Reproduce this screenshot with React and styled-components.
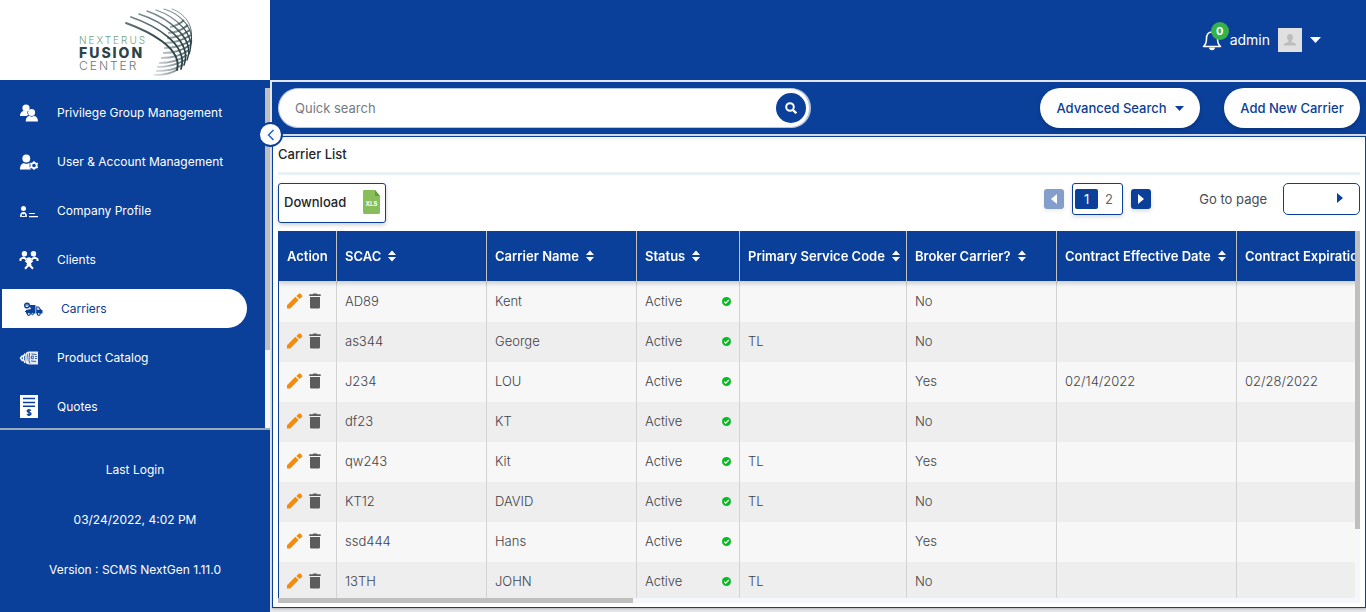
import React from "react";
import styled, { createGlobalStyle } from "styled-components";

const BLUE = "#0a4099";

const Global = createGlobalStyle`
  * { box-sizing: border-box; }
  body {
    margin: 0;
    background: #e4e5e9;
    color: #212529;
    font-family: Inter, "Liberation Sans", sans-serif;
    font-size: 13px;
  }
  button, input { font-family: inherit; font-size: inherit; }
  button { cursor: pointer; }
`;

const Shell = styled.div`
  display: flex;
  height: 100vh;
  overflow: hidden;
`;

/* Sidebar */
const Sidebar = styled.aside`
  position: relative;
  display: flex;
  flex-direction: column;
  flex: none;
  width: 270px;
  background: ${BLUE};
  color: #fff;
  font-size: 12px;
`;

const Brand = styled.a`
  display: flex;
  justify-content: center;
  flex: none;
  height: 80px;
  background: #fff;
`;

const NavArea = styled.div`
  display: flex;
  flex: 1;
  min-height: 0;
  margin-top: 8px;
  border-bottom: 2px solid #9aa9c0;
`;

const Nav = styled.nav`
  display: flex;
  flex-direction: column;
  flex: 1;
  gap: 10px;
  padding: 5px 0;
  overflow: auto;
  scrollbar-width: none;
`;

const NavLink = styled.a`
  display: flex;
  align-items: center;
  flex: none;
  height: 39px;
  gap: 18px;
  margin: 0 18px 0 2px;
  padding-left: ${(p) => (p.$active ? "21px" : "17px")};
  border-radius: 0 20px 20px 0;
  background: ${(p) => (p.$active ? "#fff" : "transparent")};
  color: ${(p) => (p.$active ? BLUE : "#fff")};
  text-decoration: none;

  svg { flex: none; }
`;

const Track = styled.div`
  flex: none;
  width: ${(p) => (p.$horizontal ? "auto" : "5px")};
  height: ${(p) => (p.$horizontal ? "5px" : "auto")};
  background: #f5f7fa;
`;

const Thumb = styled.div`
  width: ${(p) => p.$w || "100%"};
  height: ${(p) => p.$h || "100%"};
  background: #bfbfbf;
`;

const LoginInfo = styled.div`
  flex: none;
  display: flex;
  flex-direction: column;
  gap: 30px;
  padding: 30px 0 32px;
  text-align: center;
  line-height: 20px;

  p { margin: 0; }
`;

const Collapse = styled.button`
  position: absolute;
  z-index: 3;
  top: 122px;
  right: -13px;
  display: flex;
  align-items: center;
  justify-content: center;
  width: 25px;
  height: 25px;
  padding: 0;
  border: 2px solid ${BLUE};
  border-radius: 50%;
  background: #fff;
`;

/* Main column */
const Main = styled.main`
  display: flex;
  flex-direction: column;
  flex: 1;
  min-width: 0;
`;

const TopBar = styled.header`
  display: flex;
  align-items: center;
  justify-content: flex-end;
  gap: 8px;
  flex: none;
  height: 80px;
  padding-right: 45px;
  background: ${BLUE};
  color: #fff;
  font-size: 14px;
`;

const Bell = styled.button`
  position: relative;
  width: 20px;
  height: 22px;
  padding: 0;
  border: 0;
  background: none;
`;

const Badge = styled.span`
  position: absolute;
  top: -7px;
  right: -7px;
  width: 18px;
  height: 18px;
  border-radius: 50%;
  background: #36b24a;
  color: #fff;
  font-size: 11px;
  font-weight: 700;
  line-height: 18px;
`;

const UserMenu = styled.button`
  display: flex;
  align-items: center;
  gap: 8px;
  padding: 0;
  border: 0;
  background: none;
  color: #fff;
  line-height: 16px;
`;

const Body = styled.div`
  display: flex;
  flex-direction: column;
  flex: 1;
  min-height: 0;
  padding-bottom: 4px;
  border-left: 2px solid #e4e5e9;
`;

const Toolbar = styled.div`
  display: flex;
  align-items: center;
  gap: 24px;
  flex: none;
  height: 56px;
  padding: 0 6px;
  border-top: 2px solid #e4e5e9;
  border-bottom: 2px solid #d9dadd;
  background: ${BLUE};
`;

const Search = styled.form`
  display: flex;
  align-items: center;
  width: 50%;
  max-width: 533px;
  height: 40px;
  margin-right: auto;
  padding: 0 3px 0 14px;
  border: 1px solid #b5c6e0;
  border-right-width: 2px;
  border-radius: 20px;
  background: #fff;
`;

const SearchInput = styled.input`
  flex: 1;
  min-width: 0;
  border: 0;
  outline: 0;
  background: none;
  color: #333;

  &::placeholder { color: #757b82; opacity: 1; }
`;

const SearchButton = styled.button`
  display: flex;
  align-items: center;
  justify-content: center;
  width: 30px;
  height: 30px;
  padding: 0;
  border: 0;
  border-radius: 50%;
  background: ${BLUE};
`;

const Pill = styled.button`
  display: flex;
  align-items: center;
  justify-content: center;
  gap: 8px;
  width: ${(p) => p.$width};
  height: 40px;
  padding: 0;
  border: 0;
  border-radius: 20px;
  background: #fff;
  color: ${BLUE};
  font-weight: 500;
  box-shadow: 0 2px 4px rgba(0, 0, 0, 0.2);
`;

const Panel = styled.section`
  display: flex;
  flex-direction: column;
  flex: 1;
  min-height: 0;
  padding: 0 5px 4px;
  border: 1px solid ${BLUE};
  background: linear-gradient(#f4f4f4, #fff 5px);
  box-shadow: 0 1px 2px rgba(0, 0, 0, 0.2);
`;

const PanelTitle = styled.h1`
  flex: none;
  height: 38px;
  margin: 0;
  border-bottom: 3px solid #e9f1f8;
  font-size: 13px;
  font-weight: 500;
  line-height: 34px;
`;

const Actions = styled.div`
  display: flex;
  align-items: flex-start;
  flex: none;
  gap: 8px;
  height: 56px;
  padding-top: 8px;
`;

const Download = styled.button`
  display: flex;
  align-items: center;
  justify-content: space-between;
  width: 108px;
  height: 40px;
  margin-right: auto;
  padding: 0 5px 3px;
  border: 1px solid ${BLUE};
  border-radius: 3px;
  background: #fff;
  color: #212529;
  font-weight: 500;
  box-shadow: 0 2px 4px rgba(0, 0, 0, 0.2);
`;

const Step = styled.button`
  display: flex;
  align-items: center;
  justify-content: center;
  width: 20px;
  height: 20px;
  margin-top: 6px;
  padding: 0;
  border: 0;
  border-radius: 3px;
  background: ${BLUE};
  opacity: ${(p) => (p.disabled ? 0.5 : 1)};
  box-shadow: 0 2px 4px rgba(0, 0, 0, 0.15);
`;

const Pages = styled.div`
  display: flex;
  align-items: center;
  width: 51px;
  height: 32px;
  padding: 0 2px;
  border: 1px solid ${BLUE};
  border-radius: 3px;
  background: #fff;
  box-shadow: 0 2px 4px rgba(0, 0, 0, 0.15);
`;

const PageButton = styled.button`
  flex: 1;
  height: 20px;
  padding: 0;
  border: 0;
  border-radius: 2px;
  background: ${(p) => (p.$current ? BLUE : "none")};
  color: ${(p) => (p.$current ? "#fff" : "#666")};
`;

const GoLabel = styled.label`
  margin: 0 8px 0 40px;
  color: #454b52;
  line-height: 32px;
`;

const GoBox = styled.div`
  display: flex;
  align-items: center;
  width: 77px;
  height: 32px;
  padding: 0 16px 2px 0;
  border: 1px solid ${BLUE};
  border-radius: 5px;
  background: #fff;
`;

const GoInput = styled.input`
  flex: 1;
  min-width: 0;
  border: 0;
  outline: 0;
  background: none;
`;

const PlainButton = styled.button`
  display: inline-flex;
  padding: 0;
  border: 0;
  background: none;
`;

const GridArea = styled.div`
  display: flex;
  flex: 1;
  min-height: 0;
`;

const GridColumn = styled.div`
  display: flex;
  flex-direction: column;
  flex: 1;
  min-width: 0;
`;

const Scroller = styled.div`
  flex: 1;
  min-height: 0;
  overflow: auto;
  border-left: 1px solid ${BLUE};
  scrollbar-width: none;
`;

const Table = styled.table`
  width: 1158px;
  table-layout: fixed;
  border-collapse: separate;
  border-spacing: 0;
`;

const Th = styled.th`
  position: sticky;
  top: 0;
  width: ${(p) => p.$width}px;
  height: 51px;
  padding: 0 0 1px 8px;
  border-right: 1px solid #cfcfcf;
  border-bottom: 1px solid #d5d5d5;
  background: ${BLUE};
  color: #fff;
  font-weight: 600;
  text-align: left;
  white-space: nowrap;
  box-shadow: 0 2px 4px rgba(0, 0, 0, 0.15);

  svg { margin-left: 6px; vertical-align: -1px; }
`;

const Tr = styled.tr`
  background: #f7f7f7;

  &:nth-child(even) { background: #eee; }
`;

const Td = styled.td`
  height: 40px;
  padding: 0 8px 2px;
  border-right: 1px solid #d3d3d3;
  color: #3f4348;
  font-weight: 300;
`;

const RowTools = styled.div`
  display: flex;
  gap: 5px;
`;

const StatusCell = styled.div`
  display: flex;
  align-items: center;
  justify-content: space-between;
`;

/* Drawings */
const Triangle = ({ dir, color = "#fff", w = 6, h = 10 }) => (
  <svg width={w} height={h} viewBox="0 0 10 10" preserveAspectRatio="none" aria-hidden="true">
    <path fill={color} d={{ left: "M10 0v10L0 5z", right: "M0 0v10l10-5z", down: "M0 0h10L5 10z" }[dir]} />
  </svg>
);

const LogoText = styled.text`
  font-family: Inter, sans-serif;
  letter-spacing: 2px;
`;

const Logo = () => (
  <svg width="270" height="80" viewBox="0 0 270 80" role="img" aria-label="Nexterus Fusion Center">
    <defs>
      <linearGradient id="lat" gradientUnits="userSpaceOnUse" x1="154" x2="186" y1="0" y2="0">
        <stop offset="0" stopColor="#40575c" stopOpacity="0.15" />
        <stop offset="1" stopColor="#40575c" stopOpacity="0.85" />
      </linearGradient>
      <linearGradient id="lon" gradientUnits="userSpaceOnUse" x1="0" x2="0" y1="8" y2="40">
        <stop offset="0" stopColor="#40575c" stopOpacity="0.6" />
        <stop offset="1" stopColor="#2b4449" />
      </linearGradient>
    </defs>
    <LogoText x="79" y="44" fontSize="10" fontWeight="300" fill="#6fa383">NEXTERUS</LogoText>
    <LogoText x="79" y="58" fontSize="14" fontWeight="800" fill="#2b4449">FUSION</LogoText>
    <LogoText x="79" y="70" fontSize="12" fontWeight="300" fill="#6c787c">CENTER</LogoText>
    <g fill="none" stroke="url(#lat)" strokeWidth="2">
      <path d="M154 75C165 75 173 73 178 69" />
      <path d="M156 71C167 71 176 69 182 65" />
      <path d="M157 67C168 67 178 64 185 60" />
      <path d="M159 63C170 63 180 60 187 55" />
      <path d="M161 58C171 58 181 56 189 50" />
      <path d="M163 53C173 53 182 51 190 45" />
      <path d="M164 48C174 48 183 46 191 40" />
      <path d="M165 43C174 43 183 40 191 35" />
      <path d="M167 38C175 38 183 35 190 30" />
      <path d="M168 33C176 33 182 30 188 25" />
      <path d="M170 27C175 26 180 24 184 20" />
    </g>
    <g fill="none" stroke="url(#lon)" strokeLinecap="round">
      <path strokeWidth="1.9" d="M126 23C148 31 183 48 177 70" />
      <path strokeWidth="1.8" d="M131 17C154 25 189 44 181 69" />
      <path strokeWidth="1.600" d="M139 14C161 21 193 41 184 65" />
      <path strokeWidth="1.500" d="M147 11C167 18 196 38 187 60" />
      <path strokeWidth="1.300" d="M156 10C174 16 197 34 189 54" />
      <path strokeWidth="1.100" d="M164 9C181 14 197 30 190 48" />
      <path strokeWidth="0.9" d="M172 9C184 13 194 25 191 40" />
    </g>
  </svg>
);

const Icon = ({ children, w = 20, h = 20 }) => (
  <svg width={w} height={h} viewBox={`0 0 ${w} ${h}`} fill="currentColor" aria-hidden="true">
    {children}
  </svg>
);

const icons = {
  group: (
    <Icon>
      <circle cx="7" cy="5" r="3.6" />
      <path d="M1 13c0-3 1.500-5 4-5h3.500c-.6 2 .2 3.200 1 4-1 .3-1.900 1-2.300 1z" />
      <circle cx="12.600" cy="9.500" r="3.500" />
      <path d="M6.700 18.500c0-3.500 1.600-5.500 4-5.500 1.200 1 2.800 1 4 0 2.600 0 4.300 2 4.300 5.500z" />
    </Icon>
  ),
  account: (
    <Icon>
      <circle cx="7.300" cy="6.500" r="3.900" />
      <path d="M1 17.500c0-4 1.500-6.300 4-6.300 1.600.8 3.200.8 4.700 0l1.200.3c-.8 1.900-.4 4.200 1 6z" />
      <circle cx="15" cy="13.500" r="2.700" fill="none" stroke="currentColor" strokeWidth="1.800" />
      <g stroke="currentColor" strokeWidth="1.600">
        <path d="M15 9.200v1.500M15 16.300v1.500M11.200 11.300l1.400.8M17.400 14.900l1.400.8M11.200 15.700l1.400-.8M17.400 12.100l1.400-.8" />
      </g>
    </Icon>
  ),
  profile: (
    <Icon>
      <circle cx="4.500" cy="7.500" r="2.500" />
      <path fillRule="evenodd" d="M1 16c0-3.500 1.200-5 3.500-5S8 12.500 8 16H6.300c0-2.200-.5-3.200-1-3.200l-.8 1-.8-1c-.6 0-1 1-1 3.200z" />
      <path d="M3 15h3v1H3zM10 12h6v1h-6zM10 15h9v1.200h-9z" />
    </Icon>
  ),
  clients: (
    <Icon>
      <circle cx="5.400" cy="3.800" r="2.700" />
      <circle cx="14.500" cy="3.800" r="2.700" />
      <circle cx="10" cy="9.800" r="2.600" />
      <path fill="none" stroke="currentColor" strokeWidth="2" strokeLinejoin="round" d="M1.500 11V9l3-1.700 3 2M18.500 11V9l-3-1.700-3 2M6.500 10.500l3 3M13.500 10.500l-3 3M8.600 12.500v3.500L6 18.800M11.400 12.500v3.500l2.600 2.800" />
      <path d="M8 12h4v4.500H8z" />
    </Icon>
  ),
  carriers: (
    <Icon>
      <path d="M6 6h6.500v8.500H3V11l5-1zM13.200 7.500h2.600l2.500 3.200 1.200.6v3.200h-6.300z" />
      <path fill="#fff" d="M14.300 8.600h1l1.400 2.200h-2.400z" />
      <circle cx="4" cy="6.500" r="2.300" fill="#fff" stroke="currentColor" strokeWidth="1.500" />
      <path d="M3.500 5h1v2h-1zM2 12h4v1H2z" />
      <circle cx="5.800" cy="14.800" r="1.500" fill="#fff" stroke="currentColor" strokeWidth="1.200" />
      <circle cx="15.700" cy="14.800" r="1.500" fill="#fff" stroke="currentColor" strokeWidth="1.200" />
      <circle cx="9.500" cy="14.800" r="1" fill="#fff" stroke="currentColor" />
    </Icon>
  ),
  catalog: (
    <Icon>
      <path opacity=".9" d="M9 3.500h10v13H9.500L8 14z" />
      <path fill="none" stroke={BLUE} strokeWidth=".8" d="M10.500 5l-.5 8 1 2.500M12.500 6l5 .5M12.500 8l2 .2-.3 2.600-2-.2zM16 8.500h2M16 10.500h2M12 13l5 .5" />
      <path fill="none" stroke="currentColor" strokeWidth="1.500" d="M8.500 4L7 7.500v5L8.500 16M6 5.500L4.500 8.300v3.600L6 15M3.600 7.500L1.500 10l2.100 3" />
    </Icon>
  ),
  quotes: (
    <Icon h={24}>
      <path d="M1 0h18v23H1z" />
      <path stroke={BLUE} strokeWidth="1.400" d="M4 3.500h12M4 7.500h12M4 11.300h12" />
      <path fill="none" stroke={BLUE} strokeWidth="1.400" d="M12 15.500c-1-1-3.800-.9-3.800.6 0 1.700 3.800.9 3.800 2.700 0 1.600-3 1.600-4 .5M10 14v7" />
    </Icon>
  ),
};

const SortIcon = () => (
  <svg width="10" height="12" viewBox="0 0 10 12" fill="#fff" aria-hidden="true">
    <path d="M5 0.500l4 4.500H1zM5 11.500L1 7h8z" />
  </svg>
);

const Pencil = () => (
  <svg width="16" height="16" viewBox="0 0 16 16" fill="#f28c0f" aria-hidden="true">
    <path d="M0 12.200V15.500h3.300l8.300-8.500-3.300-3.300zM9.300 2.900l3.300 3.200 2.300-2.200a1.200 1.200 0 000-1.700L13.500.8a1.200 1.200 0 00-1.700 0z" />
  </svg>
);

const Trash = () => (
  <svg width="14" height="16" viewBox="0 0 14 16" fill="#5c5c5c" aria-hidden="true">
    <path d="M2 4h10v10.200c0 .8-.7 1.300-1.500 1.300h-7c-.8 0-1.500-.5-1.500-1.300zM1.300 1.200H4.700L5.400.5h3.200l.7.700h3.400v1.800H1.300z" />
  </svg>
);

const Check = () => (
  <svg width="9" height="9" viewBox="0 0 9 9" aria-hidden="true">
    <circle cx="4.500" cy="4.500" r="4.500" fill="#06bb22" />
    <path d="M2.200 4.600l1.600 1.600 3-3.200" fill="none" stroke="#fff" strokeWidth="1.200" />
  </svg>
);

const NAV = [
  ["Privilege Group Management", "group"],
  ["User & Account Management", "account"],
  ["Company Profile", "profile"],
  ["Clients", "clients"],
  ["Carriers", "carriers"],
  ["Product Catalog", "catalog"],
  ["Quotes", "quotes"],
];

const COLUMNS = [
  ["Action", 58],
  ["SCAC", 150],
  ["Carrier Name", 150],
  ["Status", 103],
  ["Primary Service Code", 167],
  ["Broker Carrier?", 150],
  ["Contract Effective Date", 180],
  ["Contract Expiration Date", 200],
];

const ROWS = [
  ["AD89", "Kent", "", "No", "", ""],
  ["as344", "George", "TL", "No", "", ""],
  ["J234", "LOU", "", "Yes", "02/14/2022", "02/28/2022"],
  ["df23", "KT", "", "No", "", ""],
  ["qw243", "Kit", "TL", "Yes", "", ""],
  ["KT12", "DAVID", "TL", "No", "", ""],
  ["ssd444", "Hans", "", "Yes", "", ""],
  ["13TH", "JOHN", "TL", "No", "", ""],
];

const CarrierTable = () => (
  <Table>
    <thead>
      <tr>
        {COLUMNS.map(([name, width], i) => (
          <Th key={name} $width={width} scope="col">
            {name}
            {i > 0 && <SortIcon />}
          </Th>
        ))}
      </tr>
    </thead>
    <tbody>
      {ROWS.map(([scac, name, service, broker, start, end]) => (
        <Tr key={scac}>
          <Td>
            <RowTools>
              <PlainButton aria-label={`Edit ${name}`}><Pencil /></PlainButton>
              <PlainButton aria-label={`Delete ${name}`}><Trash /></PlainButton>
            </RowTools>
          </Td>
          <Td>{scac}</Td>
          <Td>{name}</Td>
          <Td>
            <StatusCell>Active<Check /></StatusCell>
          </Td>
          <Td>{service}</Td>
          <Td>{broker}</Td>
          <Td>{start}</Td>
          <Td>{end}</Td>
        </Tr>
      ))}
    </tbody>
  </Table>
);

export default function App() {
  return (
    <>
      <Global />
      <Shell>
        <Sidebar>
          <Brand href="#home"><Logo /></Brand>
          <NavArea>
            <Nav>
              {NAV.map(([label, icon]) => (
                <NavLink key={label} href={`#${icon}`} $active={icon === "carriers"}>
                  {icons[icon]}
                  {label}
                </NavLink>
              ))}
            </Nav>
            <Track><Thumb $h="77%" /></Track>
          </NavArea>
          <LoginInfo>
            <p>Last Login</p>
            <p>03/24/2022, 4:02 PM</p>
            <p>Version : SCMS NextGen 1.11.0</p>
          </LoginInfo>
          <Collapse aria-label="Collapse menu">
            <svg width="8" height="12" viewBox="0 0 8 12" fill="none" stroke="#1d5fd0" strokeWidth="1.500" aria-hidden="true">
              <path d="M6.500 1L1.500 6l5 5" />
            </svg>
          </Collapse>
        </Sidebar>

        <Main>
          <TopBar>
            <Bell aria-label="Notifications">
              <svg width="20" height="22" viewBox="0 0 20 22" aria-hidden="true">
                <path d="M1.500 17.500c2.500-2 3-4 3-8 0-4 2-6.500 5.500-6.500s5.500 2.500 5.500 6.500c0 4 .5 6 3 8z" fill="none" stroke="#fff" strokeWidth="1.600" strokeLinejoin="round" />
                <path d="M7 18.500h6c0 3.500-6 3.500-6 0z" fill="#fff" />
              </svg>
              <Badge>0</Badge>
            </Bell>
            <UserMenu>
              admin
              <svg width="24" height="24" viewBox="0 0 24 24" aria-hidden="true">
                <path fill="#e0e0e0" d="M0 0h24v24H0z" />
                <path fill="#bdbdbd" d="M12 6c2 0 3 1.300 3 3.200 0 1.500-.8 2.800-1.500 3.500v1.300l3.500 1.300c.7.300 1 1 1 2.200H6c0-1.200.3-1.900 1-2.200l3.500-1.300v-1.300C9.800 12 9 10.700 9 9.200 9 7.300 10 6 12 6z" />
              </svg>
              <Triangle dir="down" w={11} h={6} />
            </UserMenu>
          </TopBar>

          <Body>
            <Toolbar>
              <Search>
                <SearchInput aria-label="Quick search" placeholder="Quick search" />
                <SearchButton type="button" aria-label="Search">
                  <svg width="12" height="12" viewBox="0 0 12 12" fill="none" stroke="#fff" strokeWidth="2" aria-hidden="true">
                    <circle cx="5" cy="5" r="3.800" />
                    <path d="M7.700 7.700l3.600 3.600" strokeWidth="2.300" />
                  </svg>
                </SearchButton>
              </Search>
              <Pill $width="160px">
                Advanced Search
                <Triangle dir="down" color={BLUE} w={9} h={5} />
              </Pill>
              <Pill $width="136px">Add New Carrier</Pill>
            </Toolbar>

            <Panel>
              <PanelTitle>Carrier List</PanelTitle>
              <Actions>
                <Download>
                  Download
                  <svg width="17" height="24" viewBox="0 0 17 24" aria-hidden="true">
                    <path fill="#87bd5a" d="M1.500 0H12l5 6v16.500c0 .8-.7 1.500-1.500 1.500h-14C.7 24 0 23.300 0 22.500v-21C0 .7.7 0 1.500 0z" />
                    <path fill="#669a3c" d="M12 0l5 6h-5z" />
                    <text x="8.500" y="16" fontSize="6" fontWeight="700" fill="#fff" textAnchor="middle">XLS</text>
                  </svg>
                </Download>
                <Step disabled aria-label="Previous page"><Triangle dir="left" /></Step>
                <Pages>
                  <PageButton $current>1</PageButton>
                  <PageButton>2</PageButton>
                </Pages>
                <Step aria-label="Next page"><Triangle dir="right" /></Step>
                <GoLabel htmlFor="page">Go to page</GoLabel>
                <GoBox>
                  <GoInput id="page" />
                  <PlainButton aria-label="Go"><Triangle dir="right" color={BLUE} /></PlainButton>
                </GoBox>
              </Actions>
              <GridArea>
                <GridColumn>
                  <Scroller><CarrierTable /></Scroller>
                  <Track $horizontal><Thumb $w="33%" /></Track>
                </GridColumn>
                <Track><Thumb $h="80%" /></Track>
              </GridArea>
            </Panel>
          </Body>
        </Main>
      </Shell>
    </>
  );
}
